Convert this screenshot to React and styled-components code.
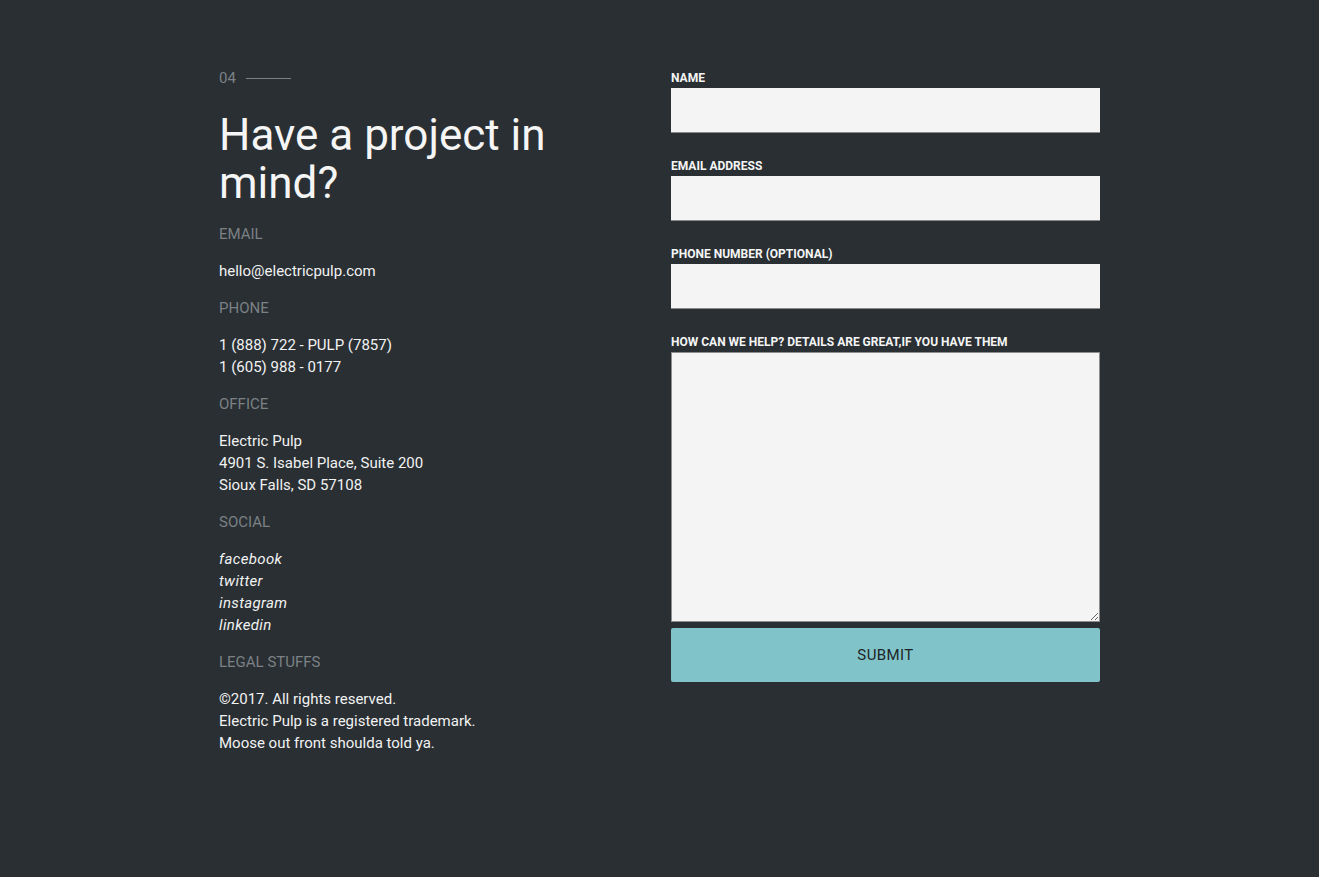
import React from 'react'
import styled, { createGlobalStyle } from 'styled-components'

const GlobalStyle = createGlobalStyle`
  html, body {
    margin: 0;
    padding: 0;
    background: #292f33;
  }
  body {
    font-family: Roboto, 'Liberation Sans', sans-serif;
    min-height: 877px;
  }
`

const Page = styled.div`
  min-height: 877px;
  background: #292f33;
  padding-top: 67px;
  box-sizing: border-box;
`

const Container = styled.div`
  width: 881px;
  margin: 0 auto;
  display: grid;
  grid-template-columns: 452px 429px;
  align-items: start;
`

const Left = styled.div`
  display: flex;
  flex-direction: column;
`

const Counter = styled.div`
  display: flex;
  align-items: center;
  gap: 10px;
  font-size: 15px;
  line-height: 22px;
  color: #7b8185;
`

const Rule = styled.span`
  display: block;
  width: 45px;
  height: 1px;
  background: #7b8185;
  margin-top: 1px;
`

const Heading = styled.h1`
  margin: 22px 0 16px;
  font-size: 44px;
  line-height: 48px;
  font-weight: 400;
  color: #f5f5f5;
  width: 360px;
`

const Label = styled.div`
  font-size: 15px;
  line-height: 22px;
  color: #7b8185;
  text-transform: uppercase;
  margin-bottom: 15px;
`

const Value = styled.div`
  font-size: 15px;
  line-height: 22px;
  color: #f2f2f2;
  margin-bottom: 15px;
  font-style: ${p => (p.$italic ? 'italic' : 'normal')};
  letter-spacing: ${p => (p.$italic ? '0.35px' : 'normal')};
`

const Line = styled.div``

const Form = styled.form`
  display: flex;
  flex-direction: column;
  margin-top: -1px;
  padding-top: 5px;
`

const FieldLabel = styled.label`
  display: block;
  font-size: 12px;
  line-height: 14px;
  font-weight: 700;
  color: #f5f5f5;
  text-transform: uppercase;
  margin-bottom: 3px;
`

const Input = styled.input`
  display: block;
  width: 100%;
  height: 45px;
  box-sizing: border-box;
  border: none;
  border-bottom: 1px solid #8a8a8a;
  background: #f4f4f4;
  margin: 0 0 26px;
  outline: none;
`

const TextArea = styled.textarea`
  display: block;
  width: 100%;
  height: 270px;
  box-sizing: border-box;
  border: 1px solid #8d8d8d;
  background: #f4f4f4;
  margin: 0 0 6px;
  outline: none;
`

const Submit = styled.button`
  width: 100%;
  height: 54px;
  border: none;
  border-radius: 2px;
  background: #80c4c9;
  color: #1e2426;
  font-family: Roboto, 'Liberation Sans', sans-serif;
  font-size: 15px;
  letter-spacing: 0.4px;
  text-transform: uppercase;
  cursor: pointer;
`

const blocks = [
  { label: 'Email', lines: ['hello@electricpulp.com'] },
  { label: 'Phone', lines: ['1 (888) 722 - PULP (7857)', '1 (605) 988 - 0177'] },
  { label: 'Office', lines: ['Electric Pulp', '4901 S. Isabel Place, Suite 200', 'Sioux Falls, SD 57108'] },
  { label: 'Social', lines: ['facebook', 'twitter', 'instagram', 'linkedin'], italic: true },
  {
    label: 'Legal Stuffs',
    lines: ['©2017. All rights reserved.', 'Electric Pulp is a registered trademark.', 'Moose out front shoulda told ya.'],
  },
]

const fields = ['Name', 'Email Address', 'Phone Number (optional)']

const App = () => {
  return (
    <Page>
      <GlobalStyle />
      <Container>
        <Left>
          <Counter>
            04
            <Rule />
          </Counter>
          <Heading>Have a project in mind?</Heading>
          {blocks.map(b => (
            <React.Fragment key={b.label}>
              <Label>{b.label}</Label>
              <Value $italic={b.italic}>
                {b.lines.map(l => (
                  <Line key={l}>{l}</Line>
                ))}
              </Value>
            </React.Fragment>
          ))}
        </Left>
        <Form onSubmit={e => e.preventDefault()}>
          {fields.map(f => (
            <div key={f}>
              <FieldLabel>{f}</FieldLabel>
              <Input type="text" />
            </div>
          ))}
          <FieldLabel>How can we help? Details are great,if you have them</FieldLabel>
          <TextArea />
          <Submit type="submit">Submit</Submit>
        </Form>
      </Container>
    </Page>
  )
}

export default App
